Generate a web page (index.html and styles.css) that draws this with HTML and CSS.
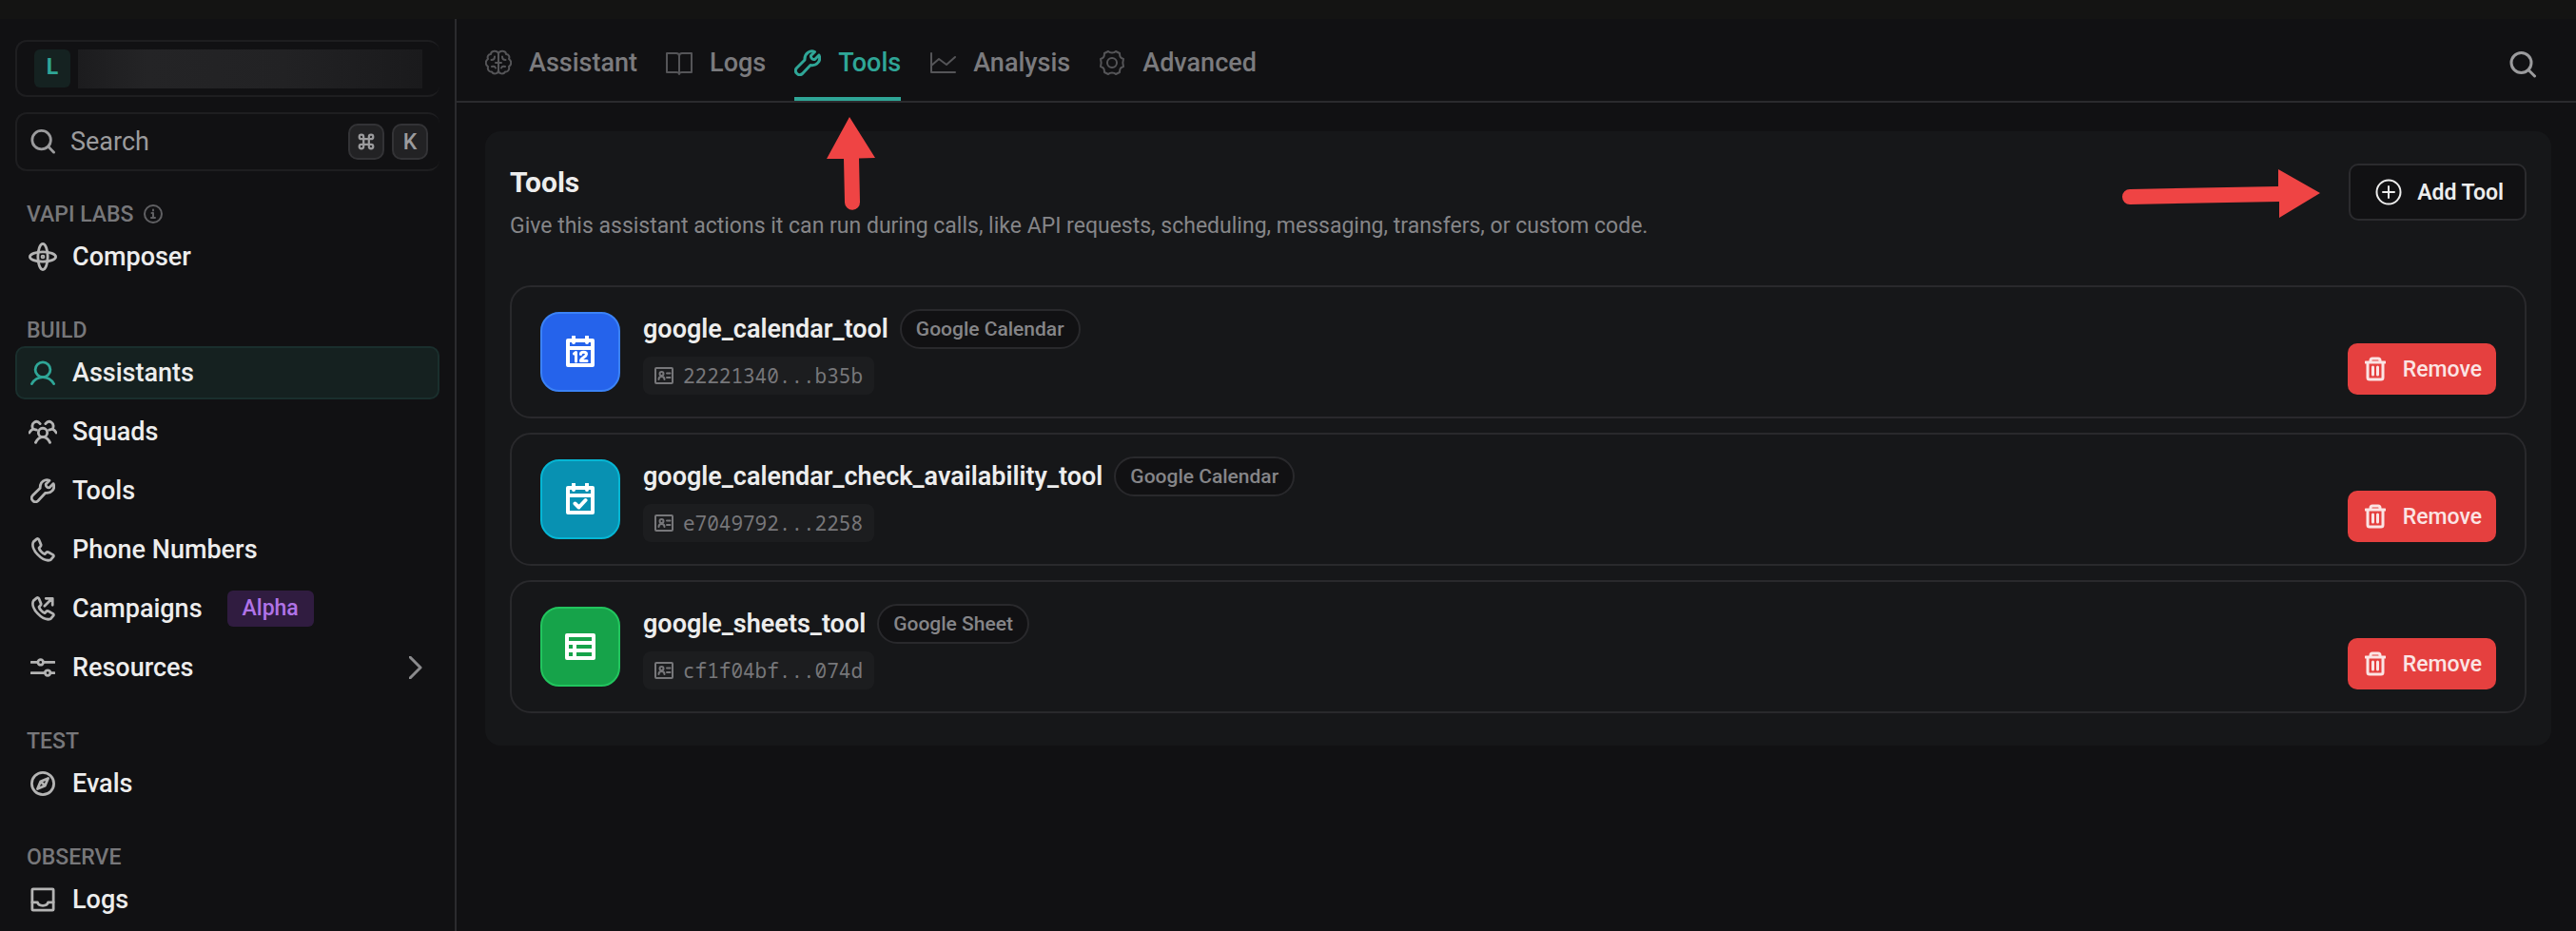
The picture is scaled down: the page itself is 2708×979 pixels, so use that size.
FILE: index.html
```html
<!DOCTYPE html>
<html lang="en">
<head>
    <meta charset="UTF-8">
    <meta name="viewport" content="width=device-width, initial-scale=1.0">
    <title>Assistant Tools</title>
    <link rel="stylesheet" href="styles.css">
</head>
<body>
    <!-- Shared icon shapes -->
    <svg class="sprite" aria-hidden="true">
        <symbol id="i-search" viewBox="0 0 28 28"><circle cx="12.500" cy="12" r="10.500"/><path d="M20 19.500l6.500 6.500"/></symbol>
        <symbol id="i-wrench" viewBox="0 0 28 28"><path d="M21.500 2.500c-4.500-2-11 1-10.500 8.500L2.500 19.500c-3.500 4 2 9.500 6 6L17 16.500c6.500 1 11.500-4.500 9-10.500l-4.500 4.500c-2 .5-4.500-1.500-4-4z"/></symbol>
        <symbol id="i-phone" viewBox="0 0 28 28"><path d="M7 2L3.500 5C-1 13 14 29 23 25.500l3-3.500c.5-1 0-2-1-2.500l-4.500-2.500c-1-.5-2-.3-2.800.5l-1.500 1.500c-3-1-6-4.500-6.500-7l1.500-1.500c.8-.8 1-1.800.5-2.800L9.500 2.500C9 1.500 8 1.300 7 2z"/></symbol>
        <symbol id="i-id" viewBox="0 0 20 18"><rect x="1" y="1" width="18" height="16" rx="1"/><circle cx="7.500" cy="7" r="2"/><path d="M4.500 13c0-4 6-4 6 0M13 6.500h3.500M13 11h3.500"/></symbol>
        <symbol id="i-trash" viewBox="0 0 22 26"><path d="M1 6h20M6 6V4q0-2 2-2h6q2 0 2 2v2M3 6v16q0 2 2 2h12q2 0 2-2V6M8.500 11v8M13.500 11v8"/></symbol>
    </svg>

    <div class="top-strip"></div>
    <div class="app">
        <aside class="sidebar">
            <button type="button" class="org" aria-label="Organization">
                <span class="org-badge">L</span>
                <span class="org-name"></span>
            </button>
            <button type="button" class="search">
                <svg class="icon"><use href="#i-search"/></svg>
                <span class="search-text">Search</span>
                <kbd><svg class="cmd" viewBox="0 0 16 16"><path d="M5.500 5.500h5v5h-5zM5.500 5.500H3.500a2 2 0 1 1 2-2zM10.500 5.500v-2a2 2 0 1 1 2 2zM10.500 10.500h2a2 2 0 1 1-2 2zM5.500 10.500v2a2 2 0 1 1-2-2z"/></svg></kbd>
                <kbd>K</kbd>
            </button>

            <nav>
                <section class="group">
                    <h2>VAPI LABS <svg class="info" viewBox="0 0 20 20"><circle cx="10" cy="10" r="9"/><path d="M8.500 9H10v5M8 14h4M10 5.500v1"/></svg></h2>
                    <a href="#" class="item">
                        <svg class="icon icon-wide" viewBox="0 0 32 32"><ellipse cx="16" cy="16" rx="14.500" ry="5.500"/><ellipse cx="16" cy="16" rx="5.500" ry="14.500"/><circle cx="16" cy="16" r="1"/></svg>
                        Composer
                    </a>
                </section>
                <section class="group">
                    <h2>BUILD</h2>
                    <a href="#" class="item active">
                        <svg class="icon" viewBox="0 0 28 28"><circle cx="14" cy="10.500" r="8.500"/><path d="M1.500 26.500c3-5 7-7.500 12.500-7.500s9.500 2.500 12.500 7.500"/></svg>
                        Assistants
                    </a>
                    <a href="#" class="item">
                        <svg class="icon icon-wide" viewBox="0 0 32 28"><circle cx="16" cy="15" r="5"/><path d="M8 26c2-4 4-6 8-6s6 2 8 6M13 5C9 0 2 4 5 11c-2 1-3 2-4 4M5 11l4 1M19 5c4-5 11-1 8 6 2 1 3 2 4 4M27 11l-4 1"/></svg>
                        Squads
                    </a>
                    <a href="#" class="item"><svg class="icon"><use href="#i-wrench"/></svg>Tools</a>
                    <a href="#" class="item"><svg class="icon"><use href="#i-phone"/></svg>Phone Numbers</a>
                    <a href="#" class="item">
                        <svg class="icon" viewBox="0 0 28 28"><use href="#i-phone" width="28" height="28"/><path d="M16 11l8-8M17.500 2.500H25V10"/></svg>
                        Campaigns
                        <span class="alpha">Alpha</span>
                    </a>
                    <a href="#" class="item">
                        <svg class="icon" viewBox="0 0 28 28"><path d="M1 8h7M15 8h12M1 20h15M23 20h4"/><circle cx="11.500" cy="8" r="3"/><circle cx="19.500" cy="20" r="3"/></svg>
                        Resources
                        <svg class="chevron" viewBox="0 0 14 24"><path d="M1 1l11 11L1 23"/></svg>
                    </a>
                </section>
                <section class="group">
                    <h2>TEST</h2>
                    <a href="#" class="item">
                        <svg class="icon" viewBox="0 0 28 28"><circle cx="14" cy="14" r="12.500"/><path d="M20 8l-3.500 8.500L8 20l3.500-8.500zM12 12l4 4"/></svg>
                        Evals
                    </a>
                </section>
                <section class="group">
                    <h2>OBSERVE</h2>
                    <a href="#" class="item">
                        <svg class="icon" viewBox="0 0 28 28"><rect x="2" y="2" width="24" height="24" rx="1"/><path d="M2 17h6c1 5 11 5 12 0h6"/></svg>
                        Logs
                    </a>
                </section>
            </nav>
        </aside>

        <main class="main">
            <header class="tabs">
                <a href="#" class="tab">
                    <svg class="icon" viewBox="0 0 28 28"><path d="M14 4c-1.500-3.500-8-3-8 1-3 0-4 3-3 5-3 2-3 6 0 8-1 4 2 6 4 5.500 1.500 3 7 2.500 7-1.500 0 4 5.500 4.500 7 1.500 2 .5 5-1.500 4-5.500 3-2 3-6 0-8 1-2 0-5-3-5 0-4-6.500-4.500-8-1zM14 4v18M14 14h-3M14 14h3M10 7.500c0 2-1 3.500-3.500 3.500M18 7.500c0 2 1 3.500 3.500 3.500M7 18q3-1 4 1.500M21 18q-3-1-4 1.500"/></svg>
                    Assistant
                </a>
                <a href="#" class="tab">
                    <svg class="icon" viewBox="0 0 28 28"><path d="M14 7q0-3-3-3H1v20h10q3 0 3 2 0-2 3-2h10V4H17q-3 0-3 3zM14 7v19"/></svg>
                    Logs
                </a>
                <a href="#" class="tab current"><svg class="icon"><use href="#i-wrench"/></svg>Tools</a>
                <a href="#" class="tab">
                    <svg class="icon" viewBox="0 0 28 28"><path d="M2 4v20h25M2 17l8-7 8 6 9-8"/></svg>
                    Analysis
                </a>
                <a href="#" class="tab">
                    <svg class="icon" viewBox="0 0 28 28"><circle cx="14" cy="14" r="5"/><path d="M10 2c2 2 6 2 8 0l4 2c0 4 1 5 4 6 -1 3 -1 5 0 8-3 1-4 2-4 6l-4 2c-2-2-6-2-8 0l-4-2c0-4-1-5-4-6 1-3 1-5 0-8 3-1 4-2 4-6z"/></svg>
                    Advanced
                </a>
                <button type="button" class="tab-search" aria-label="Search"><svg class="icon"><use href="#i-search"/></svg></button>
            </header>

            <section class="panel">
                <div class="panel-head">
                    <div>
                        <h1>Tools</h1>
                        <p>Give this assistant actions it can run during calls, like API requests, scheduling, messaging, transfers, or custom code.</p>
                    </div>
                    <button type="button" class="add">
                        <svg class="icon" viewBox="0 0 28 28"><circle cx="14" cy="14" r="12.500"/><path d="M14 8v12M8 14h12"/></svg>
                        Add Tool
                    </button>
                </div>

                <ul class="tool-list">
                    <li class="tool">
                        <span class="tool-icon blue">
                            <svg viewBox="0 0 32 34"><path d="M3 5h26v26H3zM3 13h26M9 1v6M23 1v6"/><path class="thin" d="M9.500 19l2-1.500V27M16.500 19.500c0-3 6-3 6 0 0 2.500-6 4-6 7h6.500"/></svg>
                        </span>
                        <div class="tool-info">
                            <div class="tool-title"><h3>google_calendar_tool</h3><span class="pill">Google Calendar</span></div>
                            <span class="tool-id"><svg><use href="#i-id"/></svg>22221340...b35b</span>
                        </div>
                        <button type="button" class="remove"><svg><use href="#i-trash"/></svg>Remove</button>
                    </li>
                    <li class="tool">
                        <span class="tool-icon cyan">
                            <svg viewBox="0 0 32 34"><path d="M3 5h26v26H3zM3 13h26M9 1v6M23 1v6M10.500 21.500l4 4 7-7.500"/></svg>
                        </span>
                        <div class="tool-info">
                            <div class="tool-title"><h3>google_calendar_check_availability_tool</h3><span class="pill">Google Calendar</span></div>
                            <span class="tool-id"><svg><use href="#i-id"/></svg>e7049792...2258</span>
                        </div>
                        <button type="button" class="remove"><svg><use href="#i-trash"/></svg>Remove</button>
                    </li>
                    <li class="tool">
                        <span class="tool-icon green">
                            <svg viewBox="0 0 32 34"><path d="M2 5h28v24H2zM2 13h28M2 21h28M10 13v16"/></svg>
                        </span>
                        <div class="tool-info">
                            <div class="tool-title"><h3>google_sheets_tool</h3><span class="pill">Google Sheet</span></div>
                            <span class="tool-id"><svg><use href="#i-id"/></svg>cf1f04bf...074d</span>
                        </div>
                        <button type="button" class="remove"><svg><use href="#i-trash"/></svg>Remove</button>
                    </li>
                </ul>
            </section>

            <!-- Callout arrows -->
            <svg class="arrow arrow-up" viewBox="0 0 52 100"><path d="M24 0l27 43-17 .5 1 46a8 8 0 0 1-16 .5l-1-46H0z"/></svg>
            <svg class="arrow arrow-right" viewBox="0 0 210 52"><path d="M209 25L166 51v-17L9 37a8 8 0 0 1 0-16l156-3V0z"/></svg>
        </main>
    </div>
</body>
</html>
```
FILE: styles.css
```css
* {
    box-sizing: border-box;
}

body {
    margin: 0;
    min-height: 100vh;
    display: flex;
    flex-direction: column;
    background: #111113;
    color: #ededed;
    font-family: Roboto, "Liberation Sans", sans-serif;
    font-size: 27px;
    font-weight: 500;
}

h1, h2, h3, p, ul {
    margin: 0;
    padding: 0;
}

a {
    color: inherit;
    text-decoration: none;
}

button {
    font: inherit;
    color: inherit;
    cursor: pointer;
}

svg {
    flex: none;
    fill: none;
    stroke: currentColor;
    stroke-width: 2;
    stroke-linejoin: round;
    stroke-linecap: round;
}

.sprite {
    display: none;
}

.icon {
    width: 28px;
    height: 28px;
}

.top-strip {
    height: 20px;
    background: #141413;
}

.app {
    flex: 1;
    display: flex;
}

/* Sidebar */
.sidebar {
    flex: none;
    width: 480px;
    padding: 22px 16px 0;
    border-right: 2px solid #2b2b2e;
}

.org, .search {
    width: 100%;
    display: flex;
    align-items: center;
    background: none;
    border: 2px solid #1e1e20;
    border-right: 0;
    border-radius: 12px;
}

.org {
    height: 60px;
    padding: 0 18px;
    gap: 8px;
}

.org-badge {
    width: 38px;
    height: 40px;
    line-height: 38px;
    border-radius: 6px;
    background: #152221;
    color: #2fa697;
    font-size: 23px;
    font-weight: 700;
}

.org-name {
    flex: 1;
    height: 41px;
    background: linear-gradient(90deg, #1c1c1e, #242426 20%, #222224 60%, #1a1a1c);
}

.search {
    height: 62px;
    margin-top: 16px;
    padding: 0 12px 0 14px;
    gap: 8px;
    color: #9b9b9d;
    font-weight: 400;
}

.search-text {
    flex: 1;
    padding-left: 8px;
    text-align: left;
}

.sidebar .icon {
    width: 26px;
    height: 26px;
    stroke-width: 3;
}

kbd {
    width: 38px;
    height: 38px;
    display: flex;
    align-items: center;
    justify-content: center;
    border: 2px solid #333336;
    border-radius: 10px;
    background: #222224;
    font: 500 23px Roboto, sans-serif;
}

.cmd {
    width: 18px;
    height: 18px;
}

.group {
    display: flex;
    flex-direction: column;
    gap: 6px;
    margin-top: 38px;
}

.group:first-child {
    margin-top: 34px;
}

.group h2 {
    display: flex;
    align-items: center;
    gap: 10px;
    height: 22px;
    margin-left: 12px;
    color: #77777a;
    font-size: 23px;
    font-weight: 500;
}

.info {
    width: 20px;
    height: 20px;
    color: #606063;
}

.item {
    display: flex;
    align-items: center;
    gap: 18px;
    height: 56px;
    padding: 0 16px 0 14px;
    border: 2px solid transparent;
    border-radius: 10px;
}

.item .icon {
    color: #b4b4b4;
}

.item .icon-wide {
    width: 30px;
    height: 30px;
    margin: 0 -2px;
}

.item.active {
    background: #152120;
    border-color: #1a2f2d;
}

.item.active .icon {
    color: #2fa697;
}

.alpha {
    margin-left: 8px;
    padding: 0 16px;
    line-height: 38px;
    border-radius: 6px;
    background: #301c40;
    color: #b073e8;
    font-size: 23px;
}

.chevron {
    width: 14px;
    height: 24px;
    margin-left: auto;
    color: #8b8b8d;
    stroke-width: 3;
}

/* Main column */
.main {
    position: relative;
    flex: 1;
    min-width: 0;
}

.tabs {
    display: flex;
    align-items: stretch;
    gap: 30px;
    height: 88px;
    padding: 0 42px 0 30px;
    border-bottom: 2px solid #2b2b2e;
}

.tab {
    display: flex;
    align-items: center;
    gap: 18px;
    padding-top: 10px;
    border-bottom: 4px solid transparent;
    color: #7b7b7e;
}

.tab .icon {
    color: #555558;
}

.tab.current, .tab.current .icon {
    color: #2fa697;
}

.tab.current {
    border-color: #2fa697;
}

.tab.current .icon,
.tab-search .icon {
    stroke-width: 3;
}

.tab-search {
    display: flex;
    align-items: center;
    margin-left: auto;
    padding: 10px 0 0;
    border: 0;
    background: none;
    color: #9b9b9d;
}

.panel {
    margin: 30px 26px 0 30px;
    padding: 34px 26px 34px;
    border-radius: 16px;
    background: #161719;
}

.panel-head {
    display: flex;
    justify-content: space-between;
    align-items: flex-start;
}

h1 {
    font-size: 30px;
    line-height: 40px;
    font-weight: 700;
}

.panel-head p {
    margin-top: 12px;
    color: #858588;
    font-size: 23px;
    line-height: 28px;
    font-weight: 400;
}

.add {
    display: flex;
    align-items: center;
    gap: 16px;
    height: 60px;
    padding: 0 22px 0 26px;
    border: 2px solid #2b2b2e;
    border-radius: 10px;
    background: #111113;
    font-size: 23px;
    font-weight: 600;
}

.tool-list {
    margin-top: 48px;
    display: flex;
    flex-direction: column;
    gap: 15px;
    list-style: none;
}

.tool {
    display: flex;
    align-items: center;
    gap: 24px;
    height: 140px;
    padding: 0 30px;
    border: 2px solid #29292c;
    border-radius: 22px;
}

.tool-icon {
    width: 84px;
    height: 84px;
    display: grid;
    place-items: center;
    border: 2px solid;
    border-radius: 20px;
}

.tool-icon svg {
    width: 32px;
    height: 34px;
    color: #fff;
    stroke-width: 4;
}

.tool-icon .thin {
    stroke-width: 3;
}

.blue {
    background: #2563eb;
    border-color: #3b82f6;
}

.cyan {
    background: #0891b2;
    border-color: #06b6d4;
}

.green {
    background: #16a34a;
    border-color: #22c55e;
}

.tool-title {
    display: flex;
    align-items: center;
    gap: 12px;
}

h3 {
    font-size: 27px;
    font-weight: 600;
}

.pill {
    padding: 0 15px;
    line-height: 38px;
    border: 2px solid #29292c;
    border-radius: 21px;
    background: #111113;
    color: #858588;
    font-size: 21px;
}

.tool-id {
    display: inline-flex;
    align-items: center;
    gap: 10px;
    height: 40px;
    margin-top: 8px;
    padding: 0 12px;
    border-radius: 8px;
    background: #1c1d1f;
    color: #77777a;
    font: 400 21px "Noto Sans Mono", "DejaVu Sans Mono", monospace;
}

.tool-id svg {
    width: 20px;
    height: 18px;
}

.remove {
    display: flex;
    align-items: center;
    gap: 18px;
    height: 54px;
    margin: 36px 0 0 auto;
    padding: 0 15px 0 18px;
    border: 0;
    border-radius: 10px;
    background: #e5403f;
    color: #fbe4e4;
    font-size: 23px;
}

.remove svg {
    width: 22px;
    height: 26px;
    stroke-width: 3;
}

/* Arrows over the content */
.arrow {
    position: absolute;
    fill: #ef4444;
    stroke: none;
}

.arrow-up {
    left: 389px;
    top: 103px;
    width: 52px;
    height: 100px;
}

.arrow-right {
    right: 268px;
    top: 158px;
    width: 210px;
    height: 52px;
}
```
